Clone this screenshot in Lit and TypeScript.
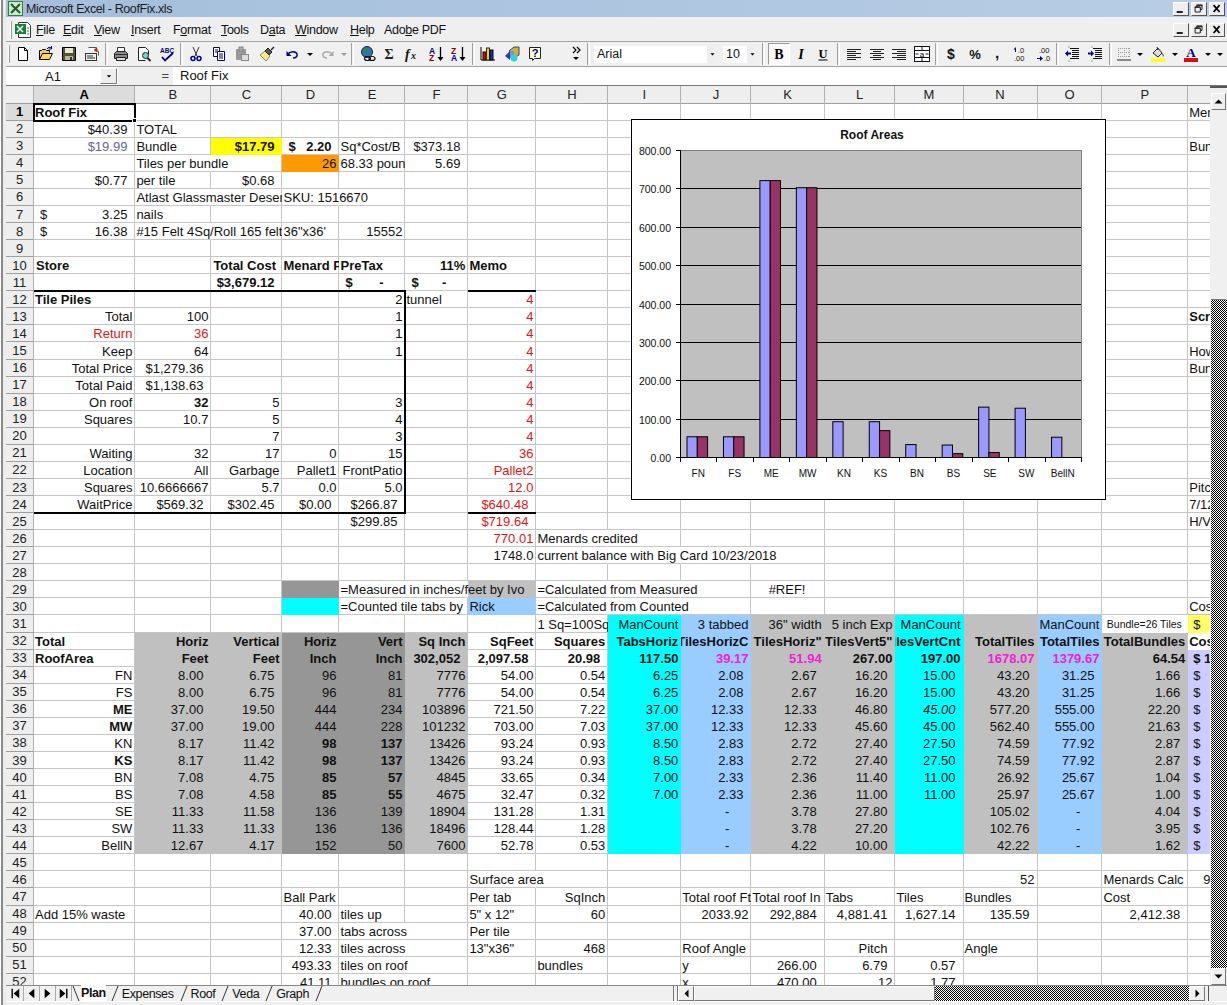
import {LitElement, css, html, svg} from 'lit';
import {customElement} from 'lit/decorators.js';

const COLS = 'ABCDEFGHIJKLMNOPQ';
const WIDTHS = [101.4, 76, 71.1, 57, 66, 62.9, 68, 71.9, 73.1, 70.1, 73.2, 70.8, 68.1, 74, 64.9, 85.8, 100];
const ROW_COUNT = 52;

type Cell = [string, string, string?];

// Sheet content, flags are class names of the text cell.
const ROWS: Record<number, Cell[]> = {
  1: [['A', 'Roof Fix', 'b'], ['Q', 'Menards']],
  2: [['A', '$40.39', 'r p'], ['B', 'TOTAL']],
  3: [['A', '$19.99', 'r p blu'], ['B', 'Bundle'], ['C', '$17.79', 'r p b'], ['D', '$|2.20', 'acc b'], ['E', 'Sq*Cost/B'], ['F', '$373.18', 'r p'], ['Q', 'Bundle']],
  4: [['B', 'Tiles per bundle'], ['D', '26', 'r'], ['E', '68.33 pounds'], ['F', '5.69', 'r p']],
  5: [['A', '$0.77', 'r p'], ['B', 'per tile'], ['C', '$0.68', 'r p']],
  6: [['B', 'Atlast Glassmaster Desert Tan'], ['D', 'SKU: 1516670']],
  7: [['A', '$|3.25', 'acc'], ['B', 'nails']],
  8: [['A', '$|16.38', 'acc'], ['B', '#15 Felt 4Sq/Roll 165 felt'], ['D', '36"x36\''], ['E', '15552', 'r']],
  10: [['A', 'Store', 'b pl'], ['C', 'Total Cost', 'b pl'], ['D', 'Menard Price', 'b'], ['E', 'PreTax', 'b'], ['F', '11%', 'r b'], ['G', 'Memo', 'b']],
  11: [['C', '$3,679.12', 'r p b'], ['E', '$|-', 'acc dd b'], ['F', '$|-', 'acc dd b']],
  12: [['A', 'Tile Piles', 'b'], ['E', '2', 'r'], ['F', 'tunnel'], ['G', '4', 'r red']],
  13: [['A', 'Total', 'r'], ['B', '100', 'r'], ['E', '1', 'r'], ['G', '4', 'r red'], ['Q', 'Scrap', 'b']],
  14: [['A', 'Return', 'r red'], ['B', '36', 'r red'], ['E', '1', 'r'], ['G', '4', 'r red']],
  15: [['A', 'Keep', 'r'], ['B', '64', 'r'], ['E', '1', 'r'], ['G', '4', 'r red'], ['Q', 'How']],
  16: [['A', 'Total Price', 'r'], ['B', '$1,279.36', 'r p'], ['G', '4', 'r red'], ['Q', 'Bundle']],
  17: [['A', 'Total Paid', 'r'], ['B', '$1,138.63', 'r p'], ['G', '4', 'r red']],
  18: [['A', 'On roof', 'r'], ['B', '32', 'r b'], ['C', '5', 'r'], ['E', '3', 'r'], ['G', '4', 'r red']],
  19: [['A', 'Squares', 'r'], ['B', '10.7', 'r'], ['C', '5', 'r'], ['E', '4', 'r'], ['G', '4', 'r red']],
  20: [['C', '7', 'r'], ['E', '3', 'r'], ['G', '4', 'r red']],
  21: [['A', 'Waiting', 'r'], ['B', '32', 'r'], ['C', '17', 'r'], ['D', '0', 'r'], ['E', '15', 'r'], ['G', '36', 'r red']],
  22: [['A', 'Location', 'r'], ['B', 'All', 'r'], ['C', 'Garbage', 'r'], ['D', 'Pallet1', 'r'], ['E', 'FrontPatio', 'r'], ['G', 'Pallet2', 'r red']],
  23: [['A', 'Squares', 'r'], ['B', '10.6666667', 'r'], ['C', '5.7', 'r'], ['D', '0.0', 'r'], ['E', '5.0', 'r'], ['G', '12.0', 'r red'], ['Q', 'Pitch']],
  24: [['A', 'WaitPrice', 'r'], ['B', '$569.32', 'r p'], ['C', '$302.45', 'r p'], ['D', '$0.00', 'r p'], ['E', '$266.87', 'r p'], ['G', '$640.48', 'r p red'], ['Q', '7/12']],
  25: [['E', '$299.85', 'r p'], ['G', '$719.64', 'r p red'], ['Q', 'H/V']],
  26: [['G', '770.01', 'r red'], ['H', 'Menards credited']],
  27: [['G', '1748.0', 'r'], ['H', 'current balance with Big Card 10/23/2018']],
  29: [['E', '=Measured in inches/feet by Ivo'], ['H', '=Calculated from Measured'], ['K', '#REF!', 'c']],
  30: [['E', '=Counted tile tabs by'], ['G', 'Rick'], ['H', '=Calculated from Counted'], ['Q', 'Cost']],
  31: [['H', '1 Sq=100Sq Ft'], ['I', 'ManCount', 'r'], ['J', '3 tabbed', 'r'], ['K', '36" width', 'r'], ['L', '5 inch Exp', 'r'], ['M', 'ManCount', 'r'], ['O', 'ManCount', 'r'], ['P', 'Bundle=26 Tiles', 'c sm'], ['Q', '$', 'pl6']],
  32: [['A', 'Total', 'b'], ['B', 'Horiz', 'r b'], ['C', 'Vertical', 'r b'], ['D', 'Horiz', 'r b'], ['E', 'Vert', 'r b'], ['F', 'Sq Inch', 'r b'], ['G', 'SqFeet', 'r b'], ['H', 'Squares', 'r b'], ['I', 'TabsHoriz', 'r b'], ['J', 'TilesHorizC', 'r b'], ['K', 'TilesHoriz"', 'r b'], ['L', 'TilesVert5"', 'r b'], ['M', 'TilesVertCnt', 'r b'], ['N', 'TotalTiles', 'r b'], ['O', 'TotalTiles', 'r b'], ['P', 'TotalBundles', 'r b'], ['Q', 'Cost', 'b']],
  33: [['A', 'RoofArea', 'b'], ['B', 'Feet', 'r b'], ['C', 'Feet', 'r b'], ['D', 'Inch', 'r b'], ['E', 'Inch', 'r b'], ['F', '302,052', 'r p b'], ['G', '2,097.58', 'r p b'], ['H', '20.98', 'r p b'], ['I', '117.50', 'r b'], ['J', '39.17', 'r mag'], ['K', '51.94', 'r mag'], ['L', '267.00', 'r b'], ['M', '197.00', 'r b'], ['N', '1678.07', 'r mag'], ['O', '1379.67', 'r mag'], ['P', '64.54', 'r b'], ['Q', '$ 1', 'pl6 b']],
  46: [['G', 'Surface area'], ['N', '52', 'r'], ['P', 'Menards Calc'], ['Q', '9', 'pl15']],
  47: [['D', 'Ball Park'], ['G', 'Per tab'], ['H', 'SqInch', 'r'], ['J', 'Total roof Ft'], ['K', 'Total roof In'], ['L', 'Tabs'], ['M', 'Tiles'], ['N', 'Bundles'], ['P', 'Cost']],
  48: [['A', 'Add 15% waste'], ['D', '40.00', 'r p'], ['E', 'tiles up'], ['G', '5" x 12"'], ['H', '60', 'r'], ['J', '2033.92', 'r'], ['K', '292,884', 'r p'], ['L', '4,881.41', 'r p'], ['M', '1,627.14', 'r p'], ['N', '135.59', 'r p'], ['P', '2,412.38', 'r p']],
  49: [['D', '37.00', 'r p'], ['E', 'tabs across'], ['G', 'Per tile']],
  50: [['D', '12.33', 'r p'], ['E', 'tiles across'], ['G', '13"x36"'], ['H', '468', 'r'], ['J', 'Roof Angle'], ['L', 'Pitch', 'r p'], ['N', 'Angle']],
  51: [['D', '493.33', 'r p'], ['E', 'tiles on roof'], ['H', 'bundles'], ['J', 'y'], ['K', '266.00', 'r p'], ['L', '6.79', 'r p'], ['M', '0.57', 'r p']],
  52: [['D', '41.11', 'r p'], ['E', 'bundles on roof'], ['J', 'x'], ['K', '470.00', 'r p'], ['L', '12', 'r'], ['M', '1.77', 'r p']],
};

// Area table, rows 34 to 44.
const AREA: string[][] = [
  ['FN', '8.00', '6.75', '96', '81', '7776', '54.00', '0.54', '6.25', '2.08', '2.67', '16.20', '15.00', '43.20', '31.25', '1.66'],
  ['FS', '8.00', '6.75', '96', '81', '7776', '54.00', '0.54', '6.25', '2.08', '2.67', '16.20', '15.00', '43.20', '31.25', '1.66'],
  ['ME', '37.00', '19.50', '444', '234', '103896', '721.50', '7.22', '37.00', '12.33', '12.33', '46.80', '45.00', '577.20', '555.00', '22.20'],
  ['MW', '37.00', '19.00', '444', '228', '101232', '703.00', '7.03', '37.00', '12.33', '12.33', '45.60', '45.00', '562.40', '555.00', '21.63'],
  ['KN', '8.17', '11.42', '98', '137', '13426', '93.24', '0.93', '8.50', '2.83', '2.72', '27.40', '27.50', '74.59', '77.92', '2.87'],
  ['KS', '8.17', '11.42', '98', '137', '13426', '93.24', '0.93', '8.50', '2.83', '2.72', '27.40', '27.50', '74.59', '77.92', '2.87'],
  ['BN', '7.08', '4.75', '85', '57', '4845', '33.65', '0.34', '7.00', '2.33', '2.36', '11.40', '11.00', '26.92', '25.67', '1.04'],
  ['BS', '7.08', '4.58', '85', '55', '4675', '32.47', '0.32', '7.00', '2.33', '2.36', '11.00', '11.00', '25.97', '25.67', '1.00'],
  ['SE', '11.33', '11.58', '136', '139', '18904', '131.28', '1.31', '', '-', '3.78', '27.80', '', '105.02', '-', '4.04'],
  ['SW', '11.33', '11.33', '136', '136', '18496', '128.44', '1.28', '', '-', '3.78', '27.20', '', '102.76', '-', '3.95'],
  ['BellN', '12.67', '4.17', '152', '50', '7600', '52.78', '0.53', '', '-', '4.22', '10.00', '', '42.22', '-', '1.62'],
];
const AREA_FLAGS = ['r', 'r p', 'r p', 'r', 'r', 'r', 'r', 'r', 'r', 'r p', 'r p', 'r p', 'r p', 'r p', 'r p', 'r p'];

AREA.forEach((vals, i) => {
  const row = 34 + i;
  const cells: Cell[] = [];
  vals.forEach((v, c) => {
    if (!v) return;
    let flags = AREA_FLAGS[c];
    if (v === '-') flags = 'r dash';
    if (c === 0 && (v === 'ME' || v === 'MW' || v === 'KS')) flags += ' b';
    if ((c === 3 || c === 4) && row >= 38 && row <= 41) flags += ' b';
    if (c === 12 && row === 36) flags += ' i';
    cells.push([COLS[c], v, flags]);
  });
  cells.push(['Q', '$', 'pl6']);
  ROWS[row] = cells;
});

const GREY = '#c0c0c0';
const DARK = '#969696';
const CYAN = '#00ffff';
const BLUE = '#99ccff';

const fills: Record<string, string> = {C3: '#ffff00', D4: '#ff9900', D29: DARK, G29: GREY, D30: CYAN, G30: BLUE, P31: '#ffffff', Q31: '#ffff66', Q32: '#ffffff', Q33: '#ccccff'};
for (let r = 32; r <= 44; r++) {
  for (const c of 'BCF') fills[c + r] = GREY;
  for (const c of 'DE') fills[c + r] = DARK;
  if (r >= 34) fills['Q' + r] = '#ccccff';
}
for (let r = 31; r <= 44; r++) {
  for (const c of 'IM') fills[c + r] = CYAN;
  for (const c of 'JO') fills[c + r] = BLUE;
  for (const c of 'KLN') fills[c + r] = GREY;
  if (r > 31) fills['P' + r] = GREY;
}

const measureCtx = document.createElement('canvas').getContext('2d')!;
function textWidth(text: string, flags: string) {
  measureCtx.font = `${flags.split(' ').includes('b') ? 'bold ' : ''}13px "Liberation Sans"`;
  return measureCtx.measureText(text).width;
}

const NAVY = '#000080';

// Toolbar glyphs on a 16x16 box.
const ICONS: Record<string, unknown> = {
  new: svg`<path d="M3.5 1.500h6l3 3v10h-9z" fill="#fff" stroke="#000"/><path d="M9.500 1.500v3h3" fill="none" stroke="#000"/>`,
  open: svg`<path d="M1.500 13.500v-9h2l1-1h3l1 1h3v2" fill="#e8d060" stroke="#000"/><path d="M1.500 13.500l3-6h10l-3 6z" fill="#ffd94a" stroke="#000"/><path d="M9 3c1-2 3-2 4.500-1M13.500 0v3h-3" fill="none" stroke="${NAVY}"/>`,
  save: svg`<path d="M1.500 1.500h13v13h-13z" fill="#55552a" stroke="#000"/><rect x="4" y="2" width="8" height="5" fill="#e8e8d8"/><rect x="4" y="10" width="8" height="4" fill="#b8b8a0"/><rect x="9" y="11" width="2" height="3" fill="#333"/>`,
  mail: svg`<path d="M4.500 1.500h8v4h2v4" fill="#fff" stroke="#555"/><circle cx="12" cy="4" r="1.800" fill="#c02020"/><rect x="1.500" y="7.500" width="11" height="7" fill="#eee" stroke="#333"/><path d="M3 10h6M3 12h8" stroke="#333"/>`,
  print: svg`<path d="M4.500 1.500h7v5h-7z" fill="#fff" stroke="#333"/><path d="M1.500 7.500l2-2h9l2 2v5h-13z" fill="#888" stroke="#222"/><path d="M3.500 11.500h9v3h-9z" fill="#ddd" stroke="#222"/><path d="M2 8.500h12" stroke="#333"/>`,
  preview: svg`<path d="M2.500 1.500h7l3 3v4M2.500 1.500v13h7" fill="#fff" stroke="#222"/><circle cx="9.500" cy="9.500" r="3" fill="#6fd8d8" stroke="#222"/><path d="M11.500 12l3 3" stroke="#222" stroke-width="2"/>`,
  spell: svg`<text x="1" y="6.500" font-size="6.500" font-weight="700" font-family="Liberation Sans" fill="${NAVY}">ABC</text><path d="M3 11l3 3.500 8-7.500" fill="none" stroke="${NAVY}" stroke-width="1.800"/>`,
  cut: svg`<path d="M5 1l4 9M11 1l-4 9" stroke="#333" fill="none"/><circle cx="5" cy="12.500" r="2" fill="none" stroke="${NAVY}" stroke-width="1.500"/><circle cx="11" cy="12.500" r="2" fill="none" stroke="${NAVY}" stroke-width="1.500"/>`,
  copy: svg`<path d="M2.500 1.500h6v9h-6z" fill="#fff" stroke="#111"/><path d="M6.500 5.500h7v9h-7z" fill="#fff" stroke="${NAVY}"/><path d="M4 4h3M4 6h2M8 8h4M8 10h4M8 12h4" stroke="${NAVY}"/>`,
  paste: svg`<rect x="2" y="3" width="10" height="11" rx="1" fill="#999"/><rect x="5" y="1" width="4" height="4" fill="#aaa" stroke="#888"/><rect x="7.500" y="8.500" width="7" height="6" fill="#ddd" stroke="#888"/>`,
  painter: svg`<path d="M1 9l5-4 5 5-4 5z" fill="#ffe97a" stroke="#888"/><path d="M6 5l3-3 4 4-3 3z" fill="#555" stroke="#222"/><path d="M12 4l3-3" stroke="#222" stroke-width="1.500"/>`,
  undo: svg`<path d="M3 8c2-3 8-3 9 0 1 3-2 4-4 4" fill="none" stroke="${NAVY}" stroke-width="1.500"/><path d="M1.500 5v5h5z" fill="${NAVY}"/>`,
  redo: svg`<path d="M13 8c-2-3-8-3-9 0-1 3 2 4 4 4" fill="none" stroke="#aaa" stroke-width="1.500"/><path d="M14.500 5v5h-5z" fill="#aaa"/>`,
  web: svg`<circle cx="7" cy="6" r="5.500" fill="#2f70c0" stroke="#222"/><path d="M4 2l3 1 1 3-3 2-1-2zM9 8l2-1 0 3z" fill="#2b8a3e"/><ellipse cx="7.500" cy="12.500" rx="3" ry="2" fill="none" stroke="#111" stroke-width="1.200"/><ellipse cx="12" cy="12.500" rx="3" ry="2" fill="none" stroke="#111" stroke-width="1.200"/>`,
  sum: svg`<text x="8" y="13" text-anchor="middle" font-size="14" font-weight="700" font-family="Liberation Serif" fill="#222">Σ</text>`,
  fx: svg`<text x="1" y="13" font-size="14" font-style="italic" font-weight="700" font-family="Liberation Serif" fill="#111">f</text><text x="7" y="13" font-size="10" font-style="italic" font-weight="700" font-family="Liberation Serif" fill="#111">x</text>`,
  az: svg`<text x="0" y="7.500" font-size="8.500" font-weight="700" font-family="Liberation Sans" fill="${NAVY}">A</text><text x="0" y="15" font-size="8.500" font-weight="700" font-family="Liberation Sans" fill="#800000">Z</text><path d="M11.500 1v10" stroke="#000" stroke-width="1.300"/><path d="M8.500 11h6l-3 4z" fill="#000"/>`,
  za: svg`<text x="0" y="7.500" font-size="8.500" font-weight="700" font-family="Liberation Sans" fill="#800000">Z</text><text x="0" y="15" font-size="8.500" font-weight="700" font-family="Liberation Sans" fill="${NAVY}">A</text><path d="M11.500 1v10" stroke="#000" stroke-width="1.300"/><path d="M8.500 11h6l-3 4z" fill="#000"/>`,
  chart: svg`<path d="M1 1v13h14" fill="none" stroke="#000"/><rect x="3" y="6" width="3" height="8" fill="#c01010" stroke="#300"/><rect x="6.500" y="2" width="3" height="12" fill="#f0d020" stroke="#330"/><rect x="10" y="4" width="3" height="10" fill="#1030c0" stroke="#003"/>`,
  map: svg`<path d="M5 5l5-4h5v8l-5 3z" fill="#c8b050" stroke="#444"/><path d="M5 5h5v7H5z" fill="#8090c0"/><path d="M1 10l5-5v9z" fill="#2040b0"/><circle cx="10" cy="12" r="3.500" fill="#30d0e0"/>`,
  help: svg`<path d="M2.500 1.500h11v11h-6l-2 2v-2h-3z" fill="#ffffd8" stroke="#222"/><text x="8" y="11" text-anchor="middle" font-size="11" font-weight="700" font-family="Liberation Sans" fill="${NAVY}">?</text>`,
  chev: svg`<path d="M3 1l3 3-3 3M7 1l3 3-3 3" fill="none" stroke="#000" stroke-width="1.200"/><path d="M3 11h6l-3 3z" fill="#000"/>`,
  dd: svg`<path d="M5 7h6l-3 3z" fill="#000"/>`,
  ddg: svg`<path d="M5 7h6l-3 3z" fill="#999"/>`,
  bold: svg`<text x="8" y="13" text-anchor="middle" font-size="14" font-weight="700" font-family="Liberation Serif" fill="#000">B</text>`,
  ital: svg`<text x="8" y="12.500" text-anchor="middle" font-size="14" font-weight="700" font-style="italic" font-family="Liberation Serif" fill="#000">I</text>`,
  under: svg`<text x="8" y="11.500" text-anchor="middle" font-size="12.500" font-weight="700" font-family="Liberation Serif" fill="#000">U</text><path d="M3.500 14h9" stroke="#000"/>`,
  left: svg`<path d="M1 3.500h14M1 5.500h9M1 7.500h14M1 9.500h9M1 11.500h14M1 13.500h9" stroke="#222"/>`,
  center: svg`<path d="M1 3.500h14M4 5.500h8M1 7.500h14M4 9.500h8M1 11.500h14M4 13.500h8" stroke="#222"/>`,
  right: svg`<path d="M1 3.500h14M6 5.500h9M1 7.500h14M6 9.500h9M1 11.500h14M6 13.500h9" stroke="#222"/>`,
  merge: svg`<rect x="0.500" y="0.500" width="15" height="15" fill="#fff" stroke="#111"/><path d="M1 4.500h14M1 11.500h14M8 1v3M8 12v3" stroke="#111"/><text x="8" y="10.500" text-anchor="middle" font-size="8" font-family="Liberation Sans" fill="#000">a</text><path d="M1.500 8h3M11.500 8h3" stroke="${NAVY}"/>`,
  dollar: svg`<text x="8" y="13" text-anchor="middle" font-size="14" font-weight="700" font-family="Liberation Sans" fill="#111">$</text>`,
  pct: svg`<text x="8" y="13" text-anchor="middle" font-size="13" font-weight="700" font-family="Liberation Sans" fill="#111">%</text>`,
  comma: svg`<text x="8" y="12" text-anchor="middle" font-size="15" font-weight="700" font-family="Liberation Sans" fill="#111">,</text>`,
  inc: svg`<path d="M4 3.500l-2.500 0 2-2.500zM3 3h1v3H3z" fill="${NAVY}"/><text x="6" y="7" font-size="7.500" font-family="Liberation Sans" fill="#111">.0</text><text x="2" y="15" font-size="7.500" font-family="Liberation Sans" fill="#111">.00</text>`,
  dec: svg`<text x="3" y="7" font-size="7.500" font-family="Liberation Sans" fill="#111">.00</text><path d="M1 12h3v-2l3 2.500-3 2.500v-2H1z" fill="${NAVY}"/><text x="8" y="15" font-size="7.500" font-family="Liberation Sans" fill="#111">.0</text>`,
  outdent: svg`<path d="M6 2.500h9M8 4.500h7M8 6.500h7M8 8.500h7M8 10.500h7M6 12.500h9" stroke="#111"/><path d="M1 7.500l3-3v2h3v2H4v2z" fill="${NAVY}"/><path d="M5 14.500v1M5 .500v1" stroke="#555"/>`,
  indent: svg`<path d="M6 2.500h9M8 4.500h7M8 6.500h7M8 8.500h7M8 10.500h7M6 12.500h9" stroke="#111"/><path d="M7 7.500l-3-3v2H1v2h3v2z" fill="${NAVY}"/><path d="M5 14.500v1M5 .500v1" stroke="#555"/>`,
  border: svg`<path d="M2 2.500h12M2 6.500h12M2 10.500h12M2.500 2v10M8.500 2v10M13.500 2v10" stroke="#999" stroke-dasharray="1 1" fill="none"/><path d="M1 14h14" stroke="#222"/>`,
  fill: svg`<path d="M3 7l5-5 4 5-4 4z" fill="#ddd" stroke="#222"/><path d="M7 1l1 3" stroke="#222"/><path d="M12 7c2 1 2 3 1 4z" fill="#333"/><rect x="1" y="12" width="14" height="4" fill="#ffff22"/>`,
  color: svg`<text x="8" y="11" text-anchor="middle" font-size="13" font-weight="700" font-family="Liberation Serif" fill="${NAVY}">A</text><rect x="1" y="12" width="14" height="4" fill="#dd0c14"/>`,
};

type Tool = [number, string] | [number];

const TOOLS_LEFT: Tool[] = [
  [23, 'new'], [23, 'open'], [23, 'save'], [23, 'mail'], [6],
  [23, 'print'], [23, 'preview'], [23, 'spell'], [6],
  [23, 'cut'], [23, 'copy'], [23, 'paste'], [27, 'painter'],
  [26, 'undo'], [8, 'dd'], [26, 'redo'], [8, 'ddg'], [8],
  [24, 'web'], [18, 'sum'], [28, 'fx'], [21, 'az'], [23, 'za'], [6],
  [24, 'chart'], [23, 'map'], [24, 'help'], [24, 'gap'], [14, 'chev'], [6],
];
const TOOLS_RIGHT: Tool[] = [
  [10], [22, 'bold'], [22, 'ital'], [22, 'under'], [8],
  [23, 'left'], [23, 'center'], [22, 'right'], [23, 'merge'], [6],
  [24, 'dollar'], [23, 'pct'], [22, 'comma'], [24, 'inc'], [23, 'dec'], [5],
  [23, 'outdent'], [24, 'indent'], [6],
  [22, 'border'], [10, 'dd'], [26, 'fill'], [8, 'dd'], [24, 'color'], [10, 'dd'], [13, 'dd'],
];

// Prefix, underlined letter, rest, and the width the item takes in the bar.
const MENU: [string, string, string, number][] = [
  ['', 'F', 'ile', 27], ['', 'E', 'dit', 31], ['', 'V', 'iew', 37], ['', 'I', 'nsert', 42], ['F', 'o', 'rmat', 48],
  ['', 'T', 'ools', 39], ['D', 'a', 'ta', 35], ['', 'W', 'indow', 55], ['', 'H', 'elp', 34], ['Ado', 'b', 'e PDF', 64],
];

const CATS = ['FN', 'FS', 'ME', 'MW', 'KN', 'KS', 'BN', 'BS', 'SE', 'SW', 'BellN'];
const SERIES_A = [54, 54, 721.5, 703, 93.24, 93.24, 33.65, 32.47, 131.28, 128.44, 52.78];
const SERIES_B = [54, 54, 721.5, 703, 0, 70, 0, 10, 13, 0, 0];
const PLOT = {x: 680, y: 150, w: 401, h: 307};

@customElement('app-root')
export class AppRoot extends LitElement {
  static styles = css`
    :host {
      display: block;
      width: 1227px;
      height: 1005px;
      overflow: hidden;
      background: #efefef;
      font-family: 'Liberation Sans', Arial, sans-serif;
      font-size: 13px;
      color: #111;
    }
    .app { display: flex; height: 1005px; }
    .strip {
      flex: 0 0 6px;
      background: linear-gradient(90deg, #fff 0 1px, #8a8a8a 1px 3px, #ececec 3px 6px);
    }
    .main { flex: 1; min-width: 0; display: flex; flex-direction: column; }

    .title {
      flex: 0 0 17px;
      display: flex;
      align-items: center;
      padding: 0 2px;
      background: linear-gradient(90deg, #a4bedb, #b8cde5);
      color: #1c1c1c;
      font-size: 12.5px;
      letter-spacing: -0.4px;
    }
    .title-icon { width: 15px; height: 15px; margin-right: 3px; }
    .title-text { flex: 1; }
    .win { display: flex; gap: 2px; }
    .wb {
      width: 16px;
      height: 14px;
      background: #eee;
      border: 1px solid;
      border-color: #fff #555 #555 #fff;
      box-sizing: border-box;
      display: block;
    }
    .menu {
      flex: 0 0 24px;
      margin-top: 1px;
      display: flex;
      align-items: center;
      padding: 0 2px;
      background: #efefef;
      border-bottom: 1px solid #a4a4a4;
      box-sizing: border-box;
      font-size: 12.5px;
      letter-spacing: -0.3px;
    }
    .grip {
      width: 2px;
      height: 18px;
      margin: 0 3px 0 2px;
      border-left: 1px solid #fff;
      border-right: 1px solid #999;
      box-sizing: border-box;
      flex: none;
    }
    .menu-icon { width: 16px; height: 16px; margin-right: 5px; flex: none; }
    .menu-item { white-space: pre; flex: none; }
    .menu-item u { text-underline-offset: 1px; }
    .spacer { flex: 1; }

    .tools {
      flex: 0 0 25px;
      display: flex;
      align-items: center;
      background: #f0f0f0;
      border-bottom: 1px solid #a4a4a4;
      box-sizing: border-box;
      overflow: hidden;
    }
    .tools .grip { margin: 0 1px 0 2px; }
    .slot { flex: none; height: 22px; display: flex; align-items: center; justify-content: center; }
    .slot svg { width: 16px; height: 16px; flex: none; }
    .slot.on { background: #fafafa; border: 1px solid; border-color: #999 #fff #fff #999; box-sizing: border-box; }
    .sep { flex: none; height: 22px; display: flex; justify-content: center; }
    .sep::after { content: ''; width: 1px; border-left: 1px solid #a0a0a0; border-right: 1px solid #fff; }
    .combo {
      flex: none;
      height: 17px;
      background: #fff;
      display: flex;
      align-items: center;
      justify-content: space-between;
      font-size: 12.5px;
      box-sizing: border-box;
      padding-left: 3px;
    }
    .font-box { width: 124px; margin: 0 5px 0 3px; }
    .size-box { width: 35px; }
    .combo-btn {
      width: 11px;
      height: 17px;
      background: #efefef;
      display: flex;
      align-items: center;
      justify-content: center;
    }
    .combo-btn svg { width: 11px; height: 16px; }

    .formula {
      flex: 0 0 19px;
      display: flex;
      background: #efefef;
      border-bottom: 1px solid #777;
      box-sizing: border-box;
    }
    .name-box {
      width: 112px;
      background: #fff;
      display: flex;
      align-items: center;
      box-sizing: border-box;
    }
    .name-text { width: 94px; text-align: center; }
    .name-btn {
      width: 17px;
      height: 16px;
      background: #eee;
      border: 1px solid;
      border-color: #fff #777 #777 #fff;
      box-sizing: border-box;
      display: flex;
      align-items: center;
      justify-content: center;
    }
    .name-btn svg { width: 12px; height: 12px; }
    .eq { width: 55px; text-align: right; padding-right: 4px; box-sizing: border-box; color: #444; line-height: 18px; }
    .input { flex: 1; background: #fff; padding-left: 7px; line-height: 18px; }

    .sheet { flex: 0 0 899px; display: flex; position: relative; overflow: hidden; }
    .area { width: 1204px; height: 899px; overflow: hidden; flex: none; background: #fff; }
    .grid { display: grid; }
    .bg { border-right: 1px solid #c6c6c6; border-bottom: 1px solid #c6c6c6; box-sizing: border-box; min-width: 0; min-height: 0; }
    .bg.fl { border-color: transparent; }
    .bg.nr { border-right-color: transparent; }
    .hd {
      background: #eeeeee;
      border-right: 1px solid #b0b0b0;
      border-bottom: 1px solid #a0a0a0;
      box-sizing: border-box;
      display: flex;
      align-items: center;
      justify-content: center;
      color: #222;
      overflow: hidden;
      min-height: 0;
    }
    .hd.top { padding-top: 1px; }
    .hd.sel { background: #dcdcdc; font-weight: 700; color: #000; }
    .t {
      display: flex;
      align-items: center;
      padding: 0 3px 0 1px;
      white-space: pre;
      overflow: hidden;
      min-width: 0;
      min-height: 0;
      line-height: 17px;
    }
    .t.r { justify-content: flex-end; }
    .t.c { justify-content: center; }
    .t.p { padding-right: 8px; }
    .t.dash { padding-right: 22px; }
    .t.acc { justify-content: space-between; padding: 0 8px 0 6px; }
    .t.dd { padding-right: 22px; }
    .t.pl { padding-left: 2px; }
    .t.pl6 { padding-left: 5px; }
    .t.pl15 { padding-left: 15px; }
    .t.b { font-weight: 700; }
    .t.i { font-style: italic; }
    .t.red { color: #e01515; }
    .t.blu { color: #666699; }
    .t.mag { color: #f020d8; font-weight: 700; }
    .t.sm { font-size: 10.5px; }
    .box1 { grid-area: 13 / 2 / 26 / 7; border: 2px solid #000; border-left: 0; margin: -1px -1px -1px 0; }
    .box2 { grid-area: 13 / 8 / 26 / 9; border-top: 2px solid #000; border-bottom: 2px solid #000; margin: -1px 0; }
    .cursor { grid-area: 2 / 2 / 3 / 3; border: 2px solid #000; margin: -1px; position: relative; }
    .handle {
      position: absolute;
      right: -3px;
      bottom: -3px;
      width: 5px;
      height: 5px;
      background: #000;
      border: 1px solid #fff;
      box-sizing: border-box;
    }
    .chart { position: absolute; left: 625px; top: 33px; width: 475px; height: 381px; }
    .chart text { font-family: 'Liberation Sans', Arial, sans-serif; fill: #111; }

    .vscroll {
      flex: 0 0 17px;
      display: flex;
      flex-direction: column;
      background: #efefef;
      padding-top: 5px;
      box-sizing: border-box;
      border-top: 2px solid #555;
    }
    .btn {
      flex: none;
      background: #f0f0f0;
      border: 1px solid;
      border-color: #fff #777 #777 #fff;
      box-sizing: border-box;
      display: flex;
      align-items: center;
      justify-content: center;
    }
    .btn svg { width: 9px; height: 9px; }
    .vscroll .btn { width: 15px; height: 17px; margin-left: 1px; }
    .thumb-v { flex: 0 0 190px; background: #f0f0f0; border-bottom: 1px solid #777; box-sizing: border-box; margin-left: 1px; width: 15px; }
    .dither { background: repeating-conic-gradient(#000 0 25%, #fff 0 50%) 0 0 / 2px 2px; flex: 1; }
    .vscroll .dither { margin-left: 1px; }

    .bottom {
      flex: 0 0 16px;
      display: flex;
      align-items: stretch;
      background: #f0f0f0;
      border-top: 1px solid #888;
      box-sizing: border-box;
    }
    .nav { display: flex; width: 66px; flex: none; padding-left: 2px; box-sizing: border-box; }
    .nav svg { width: 16px; height: 15px; box-sizing: border-box; border-right: 1px solid #aaa; }
    .tabs { display: flex; align-items: stretch; width: 601px; flex: none; font-size: 12.5px; letter-spacing: -0.4px; }
    .tab { display: flex; align-items: center; padding: 0 1px; white-space: pre; }
    .tab.active { font-weight: 700; padding: 0; background: #fff; margin-top: -1px; }
    .slash { width: 15px; height: 15px; flex: none; }
    .slash.first { width: 9px; }
    .hs-sep { width: 3px; flex: none; border-left: 1px solid #777; border-right: 1px solid #777; box-sizing: content-box; }
    .hs-btn { width: 16px; flex: none; }
    .thumb-h { width: 241px; flex: none; background: #f0f0f0; border: 1px solid; border-color: #fff #777 #777 #fff; box-sizing: border-box; }
    .corner { flex: 0 0 19px; border-left: 1px solid #555; margin-left: 3px; box-sizing: border-box; }
    .foot { flex: 1; background: #f0f0f0; border-top: 1px solid #fff; }
  `;

  private renderTool(tool: Tool) {
    const [w, name] = tool;
    if (!name) return html`<span class="sep" style="width:${w}px"></span>`;
    const icon = ICONS[name];
    return html`<span class="slot ${name === 'bold' ? 'on' : ''}" style="width:${w}px">${icon ? html`<svg viewBox="0 0 16 16">${icon}</svg>` : ''}</span>`;
  }

  private renderWinButtons() {
    return html`<span class="win">
      <svg class="wb" viewBox="0 0 16 14"><path d="M3 10.500h7" stroke="#000" stroke-width="2"/></svg>
      <svg class="wb" viewBox="0 0 16 14"><path d="M5.500 4.500v-2h6v5h-2M3.500 4.500h6v6h-6z" fill="none" stroke="#000"/><path d="M5 2.500h7M3 5h6" stroke="#000"/></svg>
      <svg class="wb" viewBox="0 0 16 14"><path d="M4 2.500l7 8M11 2.500l-7 8" stroke="#000" stroke-width="2"/></svg>
    </span>`;
  }

  private renderGrid() {
    const out: unknown[] = [];
    const noRight = new Set<string>();
    const textCells: unknown[] = [];

    for (let r = 1; r <= ROW_COUNT; r++) {
      const cells = (ROWS[r] ?? []).slice().sort((a, b) => COLS.indexOf(a[0]) - COLS.indexOf(b[0]));
      cells.forEach((cell, i) => {
        const [col, text, flags = ''] = cell;
        const c = COLS.indexOf(col);
        const parts = flags.split(' ');
        const isLeft = !parts.includes('r') && !parts.includes('c') && !parts.includes('acc');
        let span = 1;
        if (isLeft) {
          const next = cells[i + 1] ? COLS.indexOf(cells[i + 1][0]) : COLS.length;
          span = next - c;
          let room = 0;
          const need = textWidth(text, flags) + 3;
          for (let k = c; k < next - 1; k++) {
            room += WIDTHS[k];
            if (room < need) noRight.add(COLS[k] + r);
          }
        }
        const content = text.includes('|')
          ? text.split('|').map((p) => html`<span>${p}</span>`)
          : text;
        textCells.push(html`<div class="t ${flags}" style="grid-area:${r + 1} / ${c + 2} / ${r + 2} / ${c + 2 + span}">${content}</div>`);
      });
    }

    out.push(html`<div class="hd" style="grid-area:1 / 1"></div>`);
    COLS.split('').forEach((name, c) => {
      out.push(html`<div class="hd top ${c === 0 ? 'sel' : ''}" style="grid-area:1 / ${c + 2}">${name}</div>`);
    });
    for (let r = 1; r <= ROW_COUNT; r++) {
      out.push(html`<div class="hd ${r === 1 ? 'sel' : ''}" style="grid-area:${r + 1} / 1">${r}</div>`);
      COLS.split('').forEach((name, c) => {
        const key = name + r;
        const fill = fills[key];
        const cls = `bg ${fill ? 'fl' : ''} ${noRight.has(key) ? 'nr' : ''}`;
        out.push(html`<div class=${cls} style="grid-area:${r + 1} / ${c + 2};${fill ? `background:${fill}` : ''}"></div>`);
      });
    }

    const template = `28px ${WIDTHS.map((w) => w + 'px').join(' ')}`;
    return html`<div class="grid" style="grid-template-columns:${template};grid-template-rows:17.6px repeat(${ROW_COUNT}, 17.07px)">
      ${out}
      ${textCells}
      <div class="box1"></div>
      <div class="box2"></div>
      <div class="cursor"><span class="handle"></span></div>
    </div>`;
  }

  private renderChart() {
    const {x, y, w, h} = PLOT;
    const scale = h / 800;
    const catW = w / CATS.length;
    const barW = 10.3;
    return html`<svg class="chart" viewBox="631 119 475 381">
      <rect x="631.5" y="119.5" width="474" height="380" fill="#fff" stroke="#000"/>
      <text x="872" y="139" text-anchor="middle" font-size="12" font-weight="700">Roof Areas</text>
      <rect x=${x + 0.5} y=${y + 0.5} width=${w} height=${h} fill="#c0c0c0" stroke="#808080"/>
      ${[0, 1, 2, 3, 4, 5, 6, 7, 8].map((i) => {
        const gy = Math.round(y + h - i * 100 * scale) + 0.5;
        return svg`
          ${i > 0 && i < 8 ? svg`<path d="M${x} ${gy}H${x + w}" stroke="#000"/>` : ''}
          <path d="M${x - 4} ${gy}H${x}" stroke="#000"/>
          <text x=${x - 9} y=${gy + 4} text-anchor="end" font-size="10.5">${(i * 100).toFixed(2)}</text>`;
      })}
      <path d="M${x + 0.5} ${y}V${y + h + 1}M${x} ${y + h + 0.5}H${x + w + 1}" stroke="#000"/>
      ${CATS.map((name, i) => {
        const left = x + i * catW;
        const a = SERIES_A[i] * scale;
        const b = SERIES_B[i] * scale;
        const base = y + h + 0.5;
        return svg`
          <path d="M${Math.round(left) + 0.5} ${y + h}v5" stroke="#000"/>
          <rect x=${left + 7} y=${base - a} width=${barW} height=${a} fill="#9999ff" stroke="#000"/>
          ${b > 0 ? svg`<rect x=${left + 7 + barW} y=${base - b} width=${barW} height=${b} fill="#993366" stroke="#000"/>` : ''}
          <text x=${left + catW / 2} y="477" text-anchor="middle" font-size="10">${name}</text>`;
      })}
      <path d="M${x + w + 0.5} ${y + h}v5" stroke="#000"/>
    </svg>`;
  }

  render() {
    return html`<div class="app">
      <div class="strip"></div>
      <div class="main">
        <div class="title">
          <svg class="title-icon" viewBox="0 0 15 15"><rect width="15" height="15" fill="#2f7d3a"/><rect x="1" y="1" width="13" height="13" fill="#cfe6cf"/><path d="M3 3l9 9M12 3l-9 9" stroke="#1b5e20" stroke-width="2"/></svg>
          <span class="title-text">Microsoft Excel - RoofFix.xls</span>
          ${this.renderWinButtons()}
        </div>
        <div class="menu">
          <span class="grip"></span>
          <svg class="menu-icon" viewBox="0 0 16 16"><path d="M3.5 .5h9l3 3v12h-12z" fill="#fff" stroke="#333"/><rect x="0" y="2" width="11" height="10" fill="#15803a"/><path d="M2 4l6 6M8 4l-6 6" stroke="#fff" stroke-width="1.5"/><path d="M12 6h2M12 9h2M12 12h2" stroke="#15803a"/></svg>
          ${MENU.map(([a, u, b, w]) => html`<span class="menu-item" style="width:${w}px">${a}<u>${u}</u>${b}</span>`)}
          <span class="spacer"></span>
          ${this.renderWinButtons()}
        </div>
        <div class="tools">
          <span class="grip"></span>
          ${TOOLS_LEFT.map((t) => this.renderTool(t))}
          <span class="combo font-box">Arial<span class="combo-btn"><svg viewBox="0 0 16 16">${ICONS.dd}</svg></span></span>
          <span class="combo size-box">10<span class="combo-btn"><svg viewBox="0 0 16 16">${ICONS.dd}</svg></span></span>
          ${TOOLS_RIGHT.map((t) => this.renderTool(t))}
        </div>
        <div class="formula">
          <div class="name-box">
            <span class="name-text">A1</span>
            <span class="name-btn"><svg viewBox="0 0 16 16">${ICONS.dd}</svg></span>
          </div>
          <div class="eq">=</div>
          <div class="input">Roof Fix</div>
        </div>
        <div class="sheet">
          <div class="area">${this.renderGrid()}</div>
          ${this.renderChart()}
          <div class="vscroll">
            <span class="btn"><svg viewBox="0 0 9 9"><path d="M0.5 6.5h8l-4-4z" fill="#000"/></svg></span>
            <span class="thumb-v"></span>
            <span class="dither"></span>
            <span class="btn"><svg viewBox="0 0 9 9"><path d="M0.5 2.5h8l-4 4z" fill="#000"/></svg></span>
          </div>
        </div>
        <div class="bottom">
          <div class="nav">
            <svg viewBox="0 0 16 16"><path d="M4.5 3v10" stroke="#000" stroke-width="1.5"/><path d="M12 3v10l-6-5z" fill="#000"/></svg>
            <svg viewBox="0 0 16 16"><path d="M11 3v10l-6-5z" fill="#000"/></svg>
            <svg viewBox="0 0 16 16"><path d="M5 3v10l6-5z" fill="#000"/></svg>
            <svg viewBox="0 0 16 16"><path d="M11.5 3v10" stroke="#000" stroke-width="1.5"/><path d="M4 3v10l6-5z" fill="#000"/></svg>
          </div>
          <div class="tabs">
            <svg class="slash first" viewBox="0 0 9 15"><path d="M1 0l6 15" stroke="#333" fill="none"/></svg>
            <span class="tab active">Plan</span>
            <svg class="slash" viewBox="0 0 15 15"><path d="M6 15L12 0" stroke="#333" fill="none"/></svg>
            <span class="tab">Expenses</span>
            <svg class="slash" viewBox="0 0 15 15"><path d="M6 15L12 0" stroke="#333" fill="none"/></svg>
            <span class="tab">Roof</span>
            <svg class="slash" viewBox="0 0 15 15"><path d="M6 15L12 0" stroke="#333" fill="none"/></svg>
            <span class="tab">Veda</span>
            <svg class="slash" viewBox="0 0 15 15"><path d="M6 15L12 0" stroke="#333" fill="none"/></svg>
            <span class="tab">Graph</span>
            <svg class="slash" viewBox="0 0 15 15"><path d="M6 15L12 0" stroke="#333" fill="none"/></svg>
          </div>
          <span class="hs-sep"></span>
          <span class="btn hs-btn"><svg viewBox="0 0 9 9"><path d="M6.5 .5v8l-4-4z" fill="#000"/></svg></span>
          <span class="thumb-h"></span>
          <span class="dither"></span>
          <span class="btn hs-btn"><svg viewBox="0 0 9 9"><path d="M2.5 .5v8l4-4z" fill="#000"/></svg></span>
          <span class="corner"></span>
        </div>
        <div class="foot"></div>
      </div>
    </div>`;
  }
}
